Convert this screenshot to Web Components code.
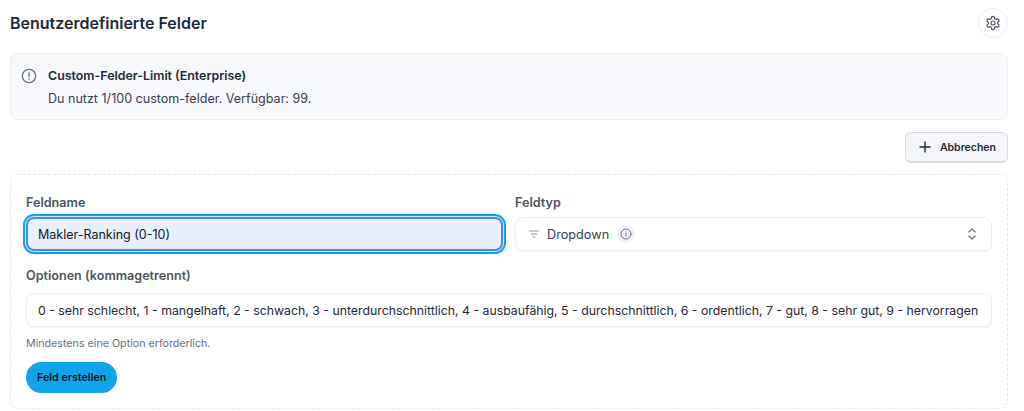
<!DOCTYPE html>
<html lang="de">
<head>
<meta charset="utf-8">
<title>Benutzerdefinierte Felder</title>
<style>
  html, body { margin: 0; background: #fff; }
  body { font-family: Inter, "Liberation Sans", sans-serif; color: #1f2937; overflow: hidden; }
</style>
</head>
<body>
<custom-fields-page></custom-fields-page>

<script>
const GEAR = `<svg width="16" height="16" viewBox="0 0 24 24" fill="none" stroke="currentColor" stroke-width="1.8" stroke-linecap="round" stroke-linejoin="round"><path d="M12.22 2h-.44a2 2 0 0 0-2 2v.18a2 2 0 0 1-1 1.73l-.43.25a2 2 0 0 1-2 0l-.15-.08a2 2 0 0 0-2.73.73l-.22.38a2 2 0 0 0 .73 2.73l.15.1a2 2 0 0 1 1 1.72v.51a2 2 0 0 1-1 1.74l-.15.09a2 2 0 0 0-.73 2.73l.22.38a2 2 0 0 0 2.73.73l.15-.08a2 2 0 0 1 2 0l.43.25a2 2 0 0 1 1 1.73V20a2 2 0 0 0 2 2h.44a2 2 0 0 0 2-2v-.18a2 2 0 0 1 1-1.73l.43-.25a2 2 0 0 1 2 0l.15.08a2 2 0 0 0 2.73-.73l.22-.39a2 2 0 0 0-.73-2.73l-.15-.08a2 2 0 0 1-1-1.74v-.5a2 2 0 0 1 1-1.74l.15-.09a2 2 0 0 0 .73-2.73l-.22-.38a2 2 0 0 0-2.73-.73l-.15.08a2 2 0 0 1-2 0l-.43-.25a2 2 0 0 1-1-1.73V4a2 2 0 0 0-2-2z"/><circle cx="12" cy="12" r="3"/></svg>`;

class InfoBox extends HTMLElement {
  constructor() {
    super();
    this.attachShadow({ mode: 'open' }).innerHTML = `
      <style>
        :host { display: flex; gap: 11px; height: 65px; padding: 0 10px; background: #f8f9fc; border: 1px solid #e9edf3; border-radius: 8px; }
        svg { margin-top: 14px; flex: none; color: #6b7280; }
        .title { font-size: 12.4px; font-weight: 600; line-height: 16px; margin-top: 14px; color: #1f2937; }
        .text { font-size: 12.55px; line-height: 16px; margin-top: 7px; color: #374151; }
      </style>
      <svg width="16" height="16" viewBox="0 0 24 24" fill="none" stroke="currentColor" stroke-width="2" stroke-linecap="round"><circle cx="12" cy="12" r="10"/><path d="M12 7v6M12 16.500v.5"/></svg>
      <div>
        <div class="title"><slot name="title"></slot></div>
        <div class="text"><slot></slot></div>
      </div>`;
  }
}

class FormField extends HTMLElement {
  constructor() {
    super();
    this.attachShadow({ mode: 'open' }).innerHTML = `
      <style>
        :host { display: block; min-width: 0; }
        label { display: block; font-size: 12.6px; font-weight: 600; line-height: 16px; color: #4b5563; margin-bottom: var(--label-gap, 6px); }
      </style>
      <label>${this.getAttribute('label')}</label>
      <slot></slot>`;
  }
}

class TextBox extends HTMLElement {
  constructor() {
    super();
    this.attachShadow({ mode: 'open' }).innerHTML = `
      <style>
        :host { display: flex; align-items: center; height: 32px; padding: 0 11px; background: #fff; border: 1px solid #eceef2; border-radius: 8px; box-shadow: 0 1px 2px rgba(0,0,0,.05); font-size: 12.3px; color: #1f2937; }
        :host([focused]) { background: #e8effd; border: 2px solid #4a86ec; height: 30px; padding: 0 10px; box-shadow: 0 0 0 1px #d3ecfc, 0 0 0 3px #0ea5e9; font-size: 12.5px; color: #111827; }
        .value { white-space: nowrap; overflow: hidden; flex: 1; min-width: 0; }
      </style>
      <div class="value"><slot></slot></div>`;
  }
}

class SelectBox extends HTMLElement {
  constructor() {
    super();
    this.attachShadow({ mode: 'open' }).innerHTML = `
      <style>
        :host { display: flex; align-items: center; height: 32px; padding: 0 13px 0 12px; background: #fff; border: 1px solid #eceef2; border-radius: 8px; box-shadow: 0 1px 2px rgba(0,0,0,.05); font-size: 12.7px; color: #374151; }
        .filter { color: #8b93a1; margin-right: 7px; flex: none; }
        .badge { width: 18px; height: 18px; margin-left: 8px; border-radius: 50%; background: #eff1f6; display: flex; align-items: center; justify-content: center; color: #6b7280; }
        .chev { margin-left: auto; color: #6b7280; }
      </style>
      <svg class="filter" width="12" height="12" viewBox="0 0 12 12" fill="none" stroke="currentColor" stroke-width="1.2" stroke-linecap="round"><path d="M1.500 3h9M3.200 6h5.600M5 9h2"/></svg>
      <slot></slot>
      <span class="badge"><svg width="12" height="12" viewBox="0 0 24 24" fill="none" stroke="currentColor" stroke-width="2" stroke-linecap="round"><circle cx="12" cy="12" r="10"/><path d="M12 11v5M12 8v.1"/></svg></span>
      <svg class="chev" width="12" height="14" viewBox="0 0 12 14" fill="none" stroke="currentColor" stroke-width="1.2" stroke-linecap="round" stroke-linejoin="round"><path d="M2.800 5 6 2l3.200 3M2.800 9 6 12l3.200-3"/></svg>`;
  }
}

class CustomFieldsPage extends HTMLElement {
  constructor() {
    super();
    this.attachShadow({ mode: 'open' }).innerHTML = `
      <style>
        :host { display: block; padding: 8px 16px 0 10px; }
        header { display: flex; align-items: center; justify-content: space-between; height: 30px; margin-bottom: 15px; }
        h1 { margin: 0; font-size: 16px; font-weight: 600; color: #1f2937; }
        .gear { width: 30px; height: 30px; box-sizing: border-box; border: 1px solid #eceef2; border-radius: 50%; display: flex; align-items: center; justify-content: center; color: #4b5563; }
        .actions { display: flex; justify-content: flex-end; margin: 12px 0 11px; }
        .cancel { display: flex; align-items: center; gap: 9px; height: 31px; box-sizing: border-box; padding: 0 11px 0 13px; background: #f5f6fa; border: 1px solid #d6dae2; border-bottom-width: 2px; border-radius: 6px; font-size: 10.5px; font-weight: 600; color: #1f2937; }
        .card { border: 1px dashed #e5e7eb; border-radius: 8px; padding: 20px 15px 0; height: 213px; }
        .row { display: grid; grid-template-columns: 1fr 1fr; gap: 12px; }
        .hint { font-size: 10.7px; line-height: 14px; color: #6b7280; margin-top: 10px; }
        .submit { display: inline-flex; align-items: center; height: 31px; padding: 0 11px; margin-top: 11px; background: #0ea5e9; border-radius: 16px; font-size: 10.7px; font-weight: 600; color: #0b1524; }
        .options { display: block; margin-top: 17px; --label-gap: 9px; }
      </style>
      <header>
        <h1>Benutzerdefinierte Felder</h1>
        <span class="gear">${GEAR}</span>
      </header>
      <info-box>
        <span slot="title">Custom-Felder-Limit (Enterprise)</span>
        Du nutzt 1/100 custom-felder. Verfügbar: 99.
      </info-box>
      <div class="actions">
        <div class="cancel">
          <svg width="12" height="12" viewBox="0 0 12 12" fill="none" stroke="currentColor" stroke-width="1.400"><path d="M6 .5v11M.5 6h11"/></svg>
          Abbrechen
        </div>
      </div>
      <div class="card">
        <div class="row">
          <form-field label="Feldname"><text-box focused>Makler-Ranking (0-10)</text-box></form-field>
          <form-field label="Feldtyp"><select-box>Dropdown</select-box></form-field>
        </div>
        <form-field class="options" label="Optionen (kommagetrennt)">
          <text-box>0 - sehr schlecht, 1 - mangelhaft, 2 - schwach, 3 - unterdurchschnittlich, 4 - ausbaufähig, 5 - durchschnittlich, 6 - ordentlich, 7 - gut, 8 - sehr gut, 9 - hervorragen</text-box>
        </form-field>
        <div class="hint">Mindestens eine Option erforderlich.</div>
        <div class="submit">Feld erstellen</div>
      </div>`;
  }
}

customElements.define('info-box', InfoBox);
customElements.define('form-field', FormField);
customElements.define('text-box', TextBox);
customElements.define('select-box', SelectBox);
customElements.define('custom-fields-page', CustomFieldsPage);
</script>
</body>
</html>
